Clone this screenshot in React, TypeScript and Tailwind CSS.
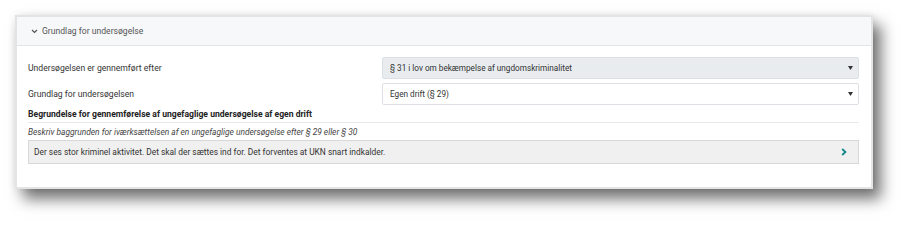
import React from "react";

function ChevronDown() {
  return (
    <svg width="7" height="5" viewBox="0 0 7 5" className="shrink-0">
      <path d="M1 1 L3.5 3.5 L6 1" fill="none" stroke="#555" strokeWidth="1.2" />
    </svg>
  );
}

function Caret() {
  return (
    <svg width="5" height="4" viewBox="0 0 5 4" className="shrink-0">
      <path d="M0 0 L5 0 L2.5 4 Z" fill="#333" />
    </svg>
  );
}

function ChevronRight() {
  return (
    <svg width="6" height="8" viewBox="0 0 6 8" className="shrink-0">
      <path d="M1.2 1 L4.4 4 L1.2 7" fill="none" stroke="#12888a" strokeWidth="1.8" />
    </svg>
  );
}

export default function App() {
  return (
    <div
      className="w-[910px] h-[225px] bg-white pl-[15px] pt-[15px] text-[#333]"
      style={{ fontFamily: 'Roboto, "Noto Sans", sans-serif' }}
    >
      <div className="w-[858px] h-[174px] bg-white border-2 border-[#e4e4e4] shadow-[8px_10px_14px_rgba(0,0,0,0.55),0_0_8px_rgba(0,0,0,0.08)] flex flex-col">
        <div className="h-[29px] bg-[#f7f8fa] border-b border-[#e3e5e8] flex items-center pl-[14px] gap-[4px] text-[8.6px] text-[#555]">
          <ChevronDown />
          <span>Grundlag for undersøgelse</span>
        </div>
        <div className="flex flex-col pl-[11px] pr-[12px] pt-[11px]">
          <div className="flex items-center">
            <div className="w-[354px] text-[8.6px]">Undersøgelsen er gennemført efter</div>
            <div className="flex-1 h-[22px] bg-[#e9ecef] border border-[#dcdfe3] rounded-[2px] flex items-center justify-between pl-[7px] pr-[5px] text-[8.2px]">
              <span>§ 31 i lov om bekæmpelse af ungdomskriminalitet</span>
              <Caret />
            </div>
          </div>
          <div className="flex items-center mt-[4px]">
            <div className="w-[354px] text-[8.6px]">Grundlag for undersøgelsen</div>
            <div className="flex-1 h-[22px] bg-white border border-[#dcdfe3] rounded-[2px] flex items-center justify-between pl-[7px] pr-[5px] text-[8.2px]">
              <span>Egen drift (§ 29)</span>
              <Caret />
            </div>
          </div>
          <div className="mt-[1px] h-[17px] flex items-center border-b border-[#e8e8e8] text-[8.6px] font-bold text-[#222]">
            Begrundelse for gennemførelse af ungefaglige undersøgelse af egen drift
          </div>
          <div className="h-[17px] flex items-center pt-[2px] text-[8.4px] italic text-[#444]">
            Beskriv baggrunden for iværksættelsen af en ungefaglige undersøgelse efter § 29 eller § 30
          </div>
          <div className="h-[24px] bg-[#f0f0f0] border border-[#d8d8d8] flex items-center justify-between pl-[5px] pr-[11px] text-[8.4px]">
            <span>Der ses stor kriminel aktivitet. Det skal der sættes ind for. Det forventes at UKN snart indkalder.</span>
            <ChevronRight />
          </div>
        </div>
      </div>
    </div>
  );
}
